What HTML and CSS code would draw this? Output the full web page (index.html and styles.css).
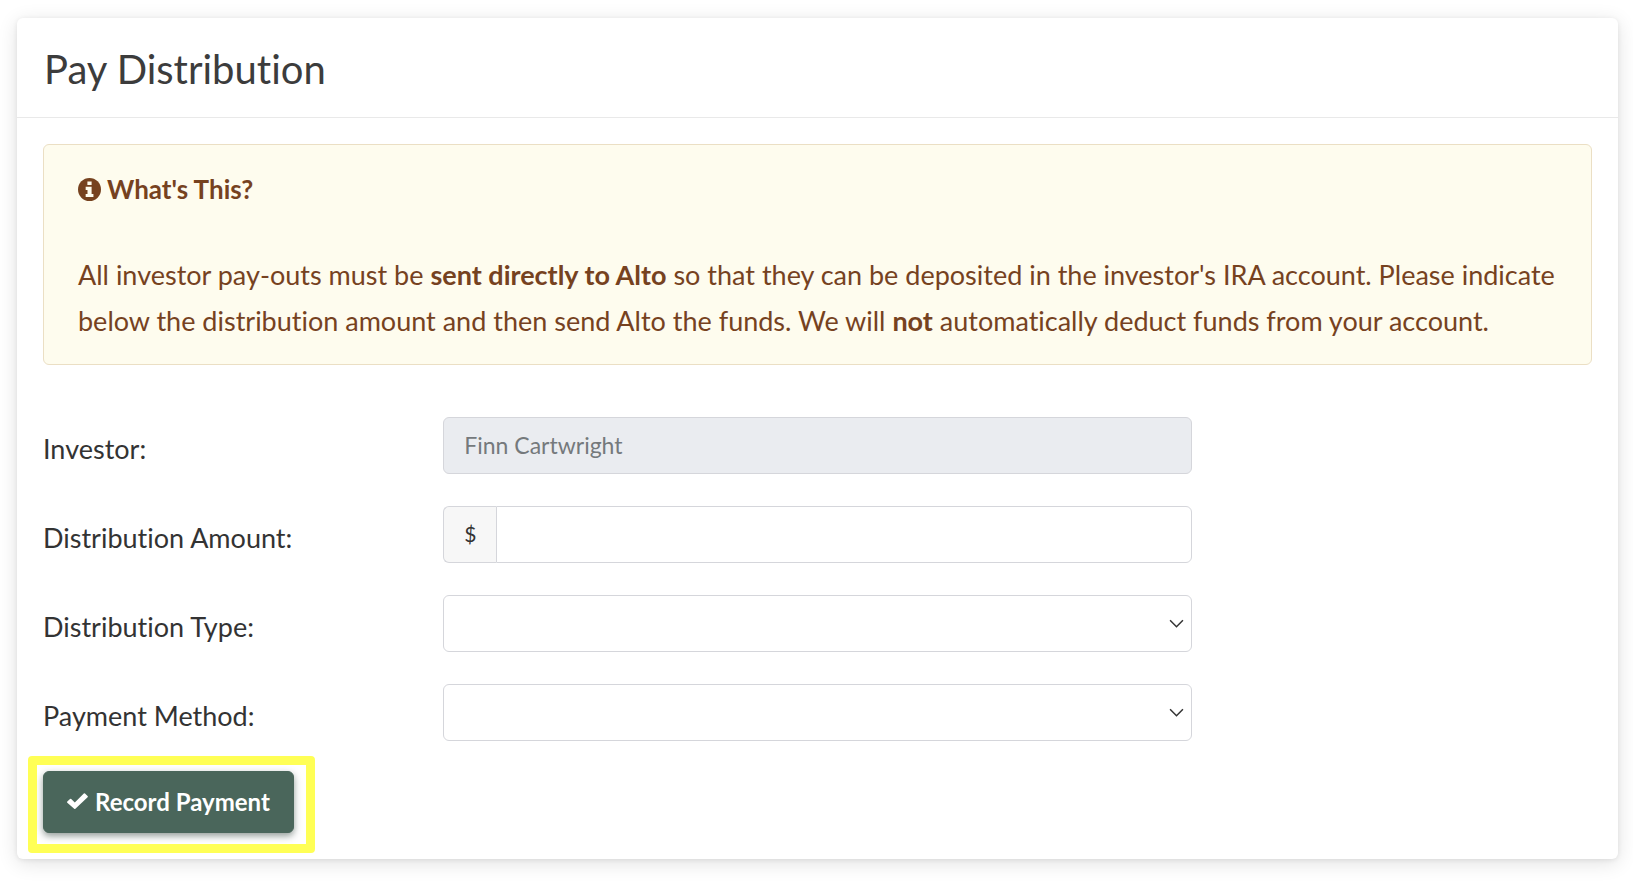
FILE: index.html
```html
<!DOCTYPE html>
<html lang="en">
<head>
    <meta charset="UTF-8">
    <meta name="viewport" content="width=device-width, initial-scale=1.0">
    <title>Pay Distribution</title>
    <link rel="stylesheet" href="styles.css">
</head>
<body>
    <main class="card">
        <header class="card-header">
            <h1>Pay Distribution</h1>
        </header>
        <div class="card-body">
            <section class="alert">
                <h2>
                    <svg class="info-icon" viewBox="0 0 24 24" aria-hidden="true">
                        <circle cx="12" cy="12" r="12" fill="currentColor"/>
                        <path d="M9.8 3.6h4.4v3.8H9.8zM8 9.2h6.2v7.4h1.9v3.2H8v-3.2h1.9v-4.2H8z" fill="#fefcee"/>
                    </svg>
                    What's This?
                </h2>
                <p>All investor pay-outs must be <strong>sent directly to Alto</strong> so that they can be deposited in the investor's IRA account. Please indicate below the distribution amount and then send Alto the funds. We will <strong>not</strong> automatically deduct funds from your account.</p>
            </section>

            <form class="payment-form">
                <div class="form-fields">
                    <div class="form-row">
                        <label for="investor">Investor:</label>
                        <input class="form-control" id="investor" type="text" value="Finn Cartwright" disabled>
                    </div>
                    <div class="form-row">
                        <label for="amount">Distribution Amount:</label>
                        <div class="input-group">
                            <span class="input-prefix">$</span>
                            <input class="form-control" id="amount" type="text">
                        </div>
                    </div>
                    <div class="form-row">
                        <label for="type">Distribution Type:</label>
                        <div class="select-wrap">
                            <select class="form-control" id="type">
                                <option value=""></option>
                            </select>
                            <svg class="chevron" viewBox="0 0 14 8" aria-hidden="true"><path d="M1 1l6 6 6-6"/></svg>
                        </div>
                    </div>
                    <div class="form-row">
                        <label for="method">Payment Method:</label>
                        <div class="select-wrap">
                            <select class="form-control" id="method">
                                <option value=""></option>
                            </select>
                            <svg class="chevron" viewBox="0 0 14 8" aria-hidden="true"><path d="M1 1l6 6 6-6"/></svg>
                        </div>
                    </div>
                </div>
                <div class="form-actions">
                    <button class="btn" type="button">
                        <svg class="check-icon" viewBox="0 0 21 16" aria-hidden="true">
                            <path d="M0.3 8.6L3 5.9q.6-.5 1.2 0l3.6 3.6L16.8.5q.6-.5 1.2 0l2.6 2.6q.5.6 0 1.2L8.4 15.7q-.6.5-1.2 0L.3 9.8q-.5-.6 0-1.2z" fill="currentColor"/>
                        </svg>
                        Record Payment
                    </button>
                </div>
            </form>
        </div>
    </main>
</body>
</html>
```

FILE: styles.css
```css
* {
    box-sizing: border-box;
}

body {
    margin: 0;
    padding: 18px 15px 22px 17px;
    background-color: #fff;
    color: #333;
    font-family: Lato, "Liberation Sans", sans-serif;
    font-size: 27px;
    font-variant-ligatures: none;
}

h1, h2, p {
    margin: 0;
}

.card {
    background-color: #fff;
    border-radius: 6px;
    box-shadow: 0 4px 20px rgba(0, 0, 0, 0.12), 0 1px 5px rgba(0, 0, 0, 0.08);
}

.card-header {
    padding: 28px 27px 24px;
    border-bottom: 1px solid #e9e9e9;
}

.card-header h1 {
    color: #3c3c3c;
    font-size: 40px;
    font-weight: 400;
    line-height: 47px;
}

.card-body {
    padding: 26px;
}

/* info box */
.alert {
    padding: 21px 34px 20px;
    border: 1px solid #ebdfc4;
    border-radius: 6px;
    background-color: #fefcee;
    color: #76421f;
    line-height: 46px;
}

.alert h2 {
    display: flex;
    align-items: center;
    gap: 6px;
    margin-bottom: 40px;
    font-size: 26px;
    font-weight: 700;
}

.info-icon {
    width: 23px;
    height: 23px;
}

/* form */
.payment-form {
    display: flex;
    flex-direction: column;
    gap: 30px;
    margin-top: 52px;
}

.form-fields {
    display: flex;
    flex-direction: column;
    gap: 32px;
}

.form-row {
    display: grid;
    grid-template-columns: repeat(12, 1fr);
    gap: 52px;
}

.form-row label {
    grid-column: span 3;
    padding-top: 9px;
    line-height: 46px;
    white-space: nowrap;
}

.form-row > .form-control,
.input-group,
.select-wrap {
    grid-column: span 6;
}

.form-control {
    width: 100%;
    height: 57px;
    padding: 0 20px 2px;
    border: 1px solid #d5d6db;
    border-radius: 6px;
    background-color: #fff;
    color: #333;
    font-family: inherit;
    font-size: 23px;
    font-variant-ligatures: none;
    appearance: none;
}

.form-control:disabled {
    background-color: #eaecf0;
    color: #75797c;
    opacity: 1;
}

.input-group {
    display: flex;
}

.input-group .form-control {
    flex: 1;
    min-width: 0;
    border-radius: 0 6px 6px 0;
}

.input-prefix {
    display: flex;
    align-items: center;
    justify-content: center;
    width: 53px;
    padding-bottom: 2px;
    border: 1px solid #d5d6db;
    border-right: 0;
    border-radius: 6px 0 0 6px;
    background-color: #f7f7f7;
    font-size: 21px;
}

.select-wrap {
    position: relative;
}

.select-wrap .form-control {
    display: block;
}

.chevron {
    position: absolute;
    top: 24px;
    right: 8px;
    width: 15px;
    height: 9px;
    fill: none;
    stroke: #333;
    stroke-width: 1.4;
    pointer-events: none;
}

.form-actions {
    position: relative;
    align-self: flex-start;
}

/* highlight frame around the submit button */
.form-actions::before {
    content: "";
    position: absolute;
    top: -15px;
    right: -21px;
    bottom: -20px;
    left: -15px;
    border: 9px solid #ffff55;
    border-radius: 4px;
    pointer-events: none;
}

.btn {
    display: flex;
    align-items: center;
    gap: 7px;
    height: 62px;
    padding: 0 23px 2px;
    border: 1px solid #4a665b;
    border-radius: 6px;
    background-color: #4a665b;
    box-shadow: 0 3px 7px rgba(40, 60, 52, 0.5);
    color: #fff;
    font-family: inherit;
    font-size: 24px;
    font-weight: 700;
    cursor: pointer;
}

.check-icon {
    width: 21px;
    height: 16px;
}
```
